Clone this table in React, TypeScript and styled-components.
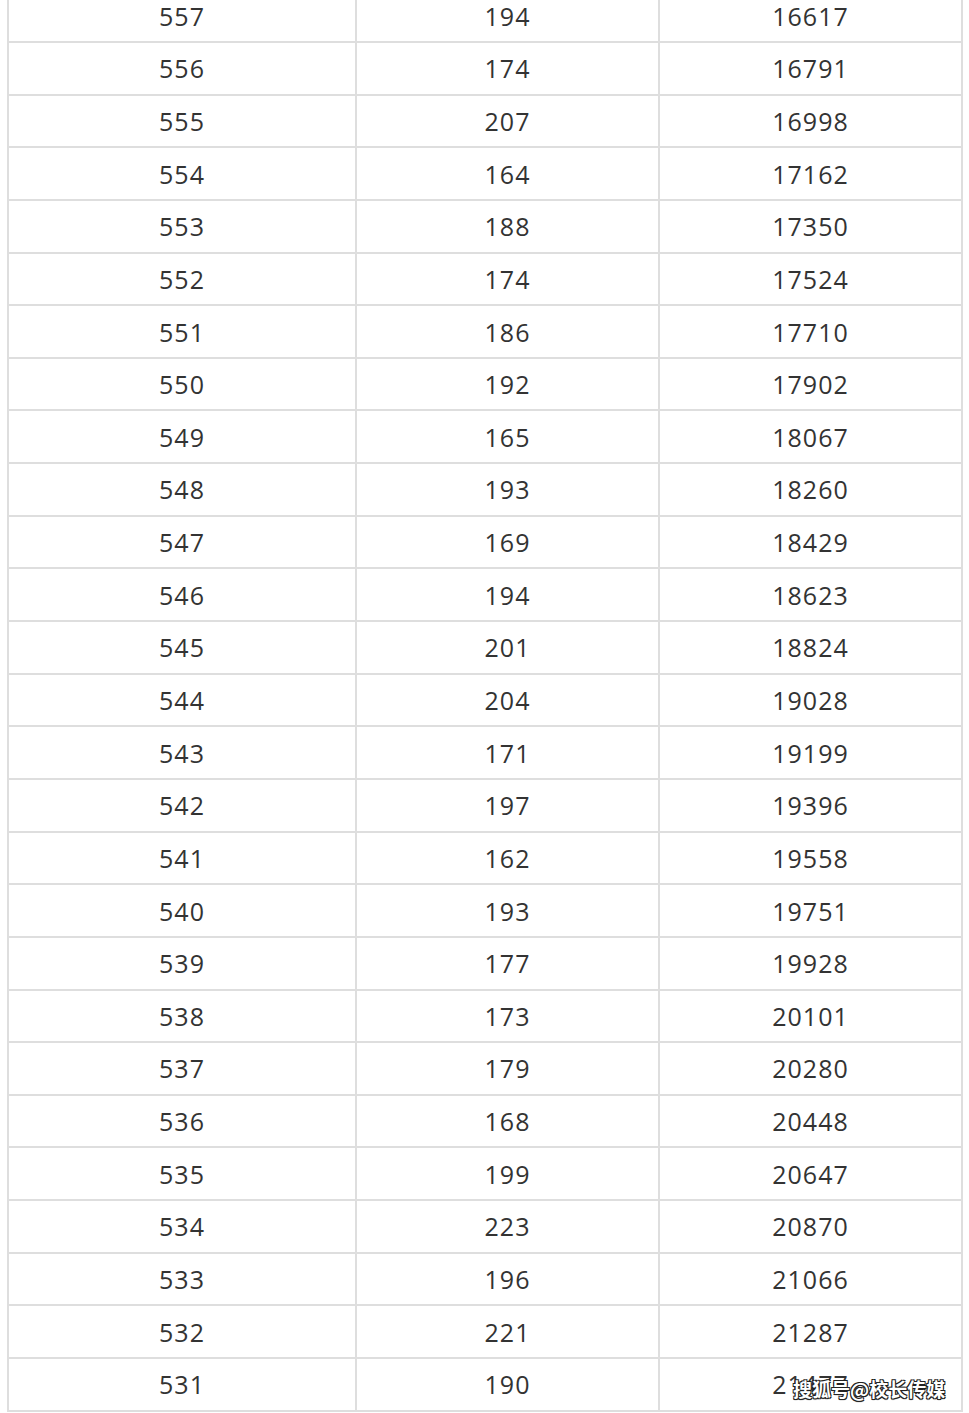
import React from 'react';
import styled, { createGlobalStyle } from 'styled-components';

const GlobalStyle = createGlobalStyle`
  html, body {
    margin: 0;
    padding: 0;
    background: #fff;
    overflow: hidden;
  }
  body {
    font-family: "Open Sans", "Noto Sans", sans-serif;
  }
`;

const rows: [number, number, number][] = [
  [557, 194, 16617],
  [556, 174, 16791],
  [555, 207, 16998],
  [554, 164, 17162],
  [553, 188, 17350],
  [552, 174, 17524],
  [551, 186, 17710],
  [550, 192, 17902],
  [549, 165, 18067],
  [548, 193, 18260],
  [547, 169, 18429],
  [546, 194, 18623],
  [545, 201, 18824],
  [544, 204, 19028],
  [543, 171, 19199],
  [542, 197, 19396],
  [541, 162, 19558],
  [540, 193, 19751],
  [539, 177, 19928],
  [538, 173, 20101],
  [537, 179, 20280],
  [536, 168, 20448],
  [535, 199, 20647],
  [534, 223, 20870],
  [533, 196, 21066],
  [532, 221, 21287],
  [531, 190, 21477],
];

const Page = styled.div`
  position: relative;
  width: 969px;
  height: 1413px;
  overflow: hidden;
`;

const Table = styled.div`
  margin: -9.65px 0 0 7px;
  width: 956px;
  box-sizing: border-box;
  border-left: 2px solid #dedede;
  border-right: 2px solid #dedede;
  display: flex;
  flex-direction: column;
`;

const Row = styled.div`
  display: grid;
  grid-template-columns: 346px 2px 301px 2px 301px;
  height: 52.65px;
  box-sizing: border-box;
  border-bottom: 2px solid #dedede;
`;

const Cell = styled.div`
  display: flex;
  align-items: center;
  justify-content: center;
  font-size: 25px;
  letter-spacing: 1px;
  color: #333;
`;

const Divider = styled.div`
  background: #dedede;
`;

const Watermark = styled.div`
  position: absolute;
  left: 793px;
  top: 1375px;
  font-family: "Noto Sans CJK SC", sans-serif;
  font-weight: 700;
  font-size: 19px;
  color: #fff;
  white-space: nowrap;
  text-shadow: 1px 1px 0 #222, -1px -1px 0 #222, 1px -1px 0 #222, -1px 1px 0 #222, 0 1px 1px #000;
`;

const App: React.FC = () => {
  return (
    <Page>
      <GlobalStyle />
      <Table>
        {rows.map(([score, count, total]) => (
          <Row key={score}>
            <Cell>{score}</Cell>
            <Divider />
            <Cell>{count}</Cell>
            <Divider />
            <Cell>{total}</Cell>
          </Row>
        ))}
      </Table>
      <Watermark>搜狐号@校长传媒</Watermark>
    </Page>
  );
};

export default App;
